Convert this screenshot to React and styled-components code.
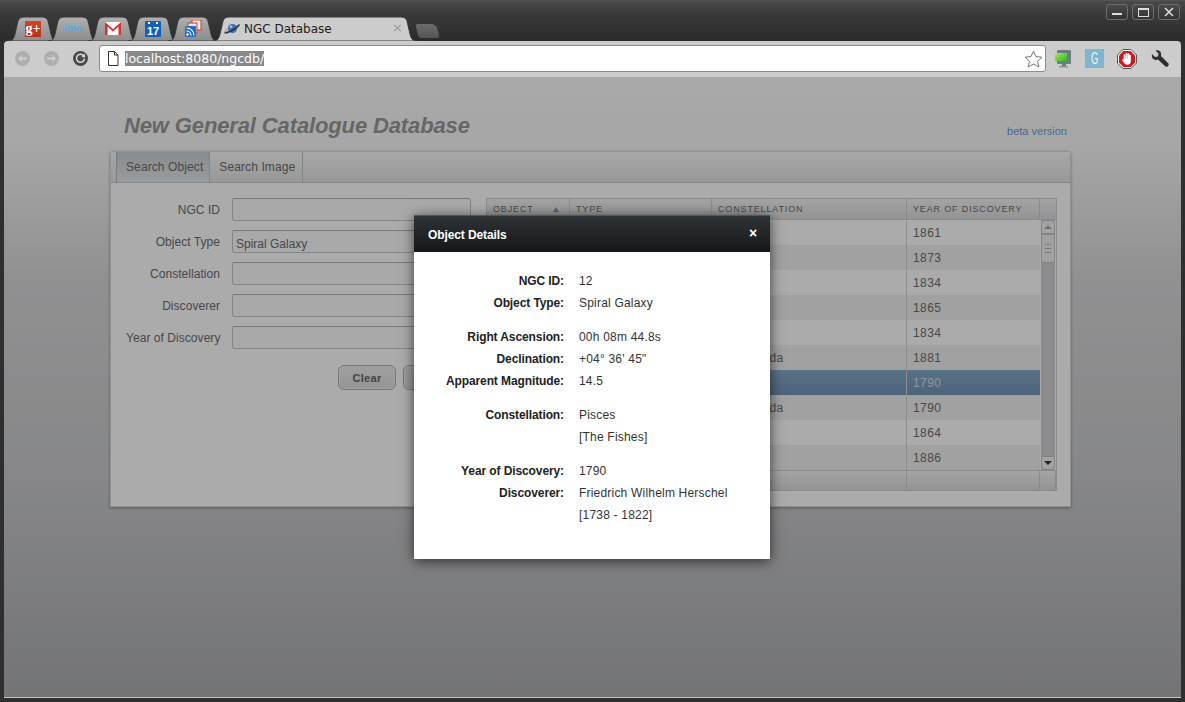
import React from "react";
import styled, { createGlobalStyle } from "styled-components";

const GlobalStyle = createGlobalStyle`
	html, body {
		margin: 0;
		padding: 0;
		height: 100%;
		overflow: hidden;
		font-family: "Liberation Sans", Arial, sans-serif;
	}
`;

const Window = styled.div`
	position: relative;
	display: flex;
	flex-direction: column;
	width: 1185px;
	height: 702px;
	padding-bottom: 4px;
	box-sizing: border-box;
	overflow: hidden;
	background: #2f2f2f;
`;

/* browser chrome */
const TitleBar = styled.div`
	display: flex;
	align-items: flex-end;
	justify-content: space-between;
	flex: none;
	height: 41px;
	padding: 0 5px 0 8px;
	background: linear-gradient(#565656 0, #484848 2px, #3a3a3a 14px, #2b2b2b 41px);
`;

const TabStrip = styled.div`
	display: flex;
	align-items: flex-end;
	height: 25px;
`;

const Tab = styled.div`
	position: relative;
	display: flex;
	align-items: center;
	justify-content: ${(p) => (p.$active ? "flex-start" : "center")};
	flex: none;
	width: ${(p) => (p.$active ? "204px" : "50px")};
	height: 25px;
	margin-left: ${(p) => (p.$active ? "5px" : "0")};
	margin-right: -10px;
	padding: ${(p) => (p.$active ? "0 0 0 11px" : "0")};
	box-sizing: border-box;
	z-index: ${(p) => (p.$active ? 2 : 1)};
`;

const TabShape = styled.svg`
	position: absolute;
	left: 0;
	top: 0;
	width: 100%;
	height: 100%;
	z-index: -1;
`;

const TabTitle = styled.span`
	margin-left: 4px;
	font-family: "DejaVu Sans", sans-serif;
	font-size: 12px;
	color: #1c1c1c;
`;

const TabClose = styled.span`
	position: absolute;
	right: 14px;
	top: 4px;
	font-family: "DejaVu Sans", sans-serif;
	font-size: 13px;
	color: #9a9a9a;
`;

const NewTab = styled.div`
	width: 21px;
	height: 14px;
	margin: 0 0 3px 10px;
	border-radius: 3px 5px 3px 3px;
	transform: skewX(14deg);
	background: linear-gradient(#6c6c6c, #555);
`;

const GooglePlus = styled.span`
	display: flex;
	align-items: center;
	justify-content: center;
	width: 16px;
	height: 16px;
	background: linear-gradient(#d4452a, #b5301a);
	color: #fff;
	font-family: "Liberation Serif", serif;
	font-weight: bold;
	font-size: 14px;
	line-height: 14px;
`;

const Imo = styled.span`
	font-size: 10px;
	font-weight: bold;
	color: #5aa8e0;
`;

const CalendarIcon = styled.span`
	display: flex;
	align-items: flex-end;
	justify-content: center;
	width: 16px;
	height: 16px;
	border-radius: 1px;
	background:
		radial-gradient(circle at 4px 2px, #fff 1px, transparent 1.3px),
		radial-gradient(circle at 12px 2px, #fff 1px, transparent 1.3px),
		#0f62b8;
	color: #fff;
	font-weight: bold;
	font-size: 11px;
	line-height: 12px;
`;

const WindowControls = styled.div`
	display: flex;
	gap: 4px;
	align-self: flex-start;
	margin-top: 4px;
`;

const ControlButton = styled.div`
	display: flex;
	align-items: center;
	justify-content: center;
	width: 22px;
	height: 16px;
	box-sizing: border-box;
	border: 1px solid #6e6e6e;
	border-radius: 3px;
	background: linear-gradient(#4a4a4a, #333);
`;

const Toolbar = styled.div`
	display: flex;
	align-items: center;
	flex: none;
	height: 36px;
	margin: 0 4px;
	padding: 0 0 1px 11px;
	box-sizing: border-box;
	border-radius: 4px 4px 0 0;
	background: #cccccc;
`;

const NavButton = styled.div`
	display: flex;
	align-items: center;
	justify-content: center;
	width: 15px;
	height: 15px;
	margin-right: ${(p) => p.$gap}px;
	border-radius: 50%;
	background: ${(p) => (p.$on ? "#4a4a4a" : "#aeaeae")};
`;

const UrlBox = styled.div`
	display: flex;
	align-items: center;
	flex: none;
	width: 947px;
	height: 27px;
	margin: 0 8px 0 11px;
	padding: 0 2px 0 7px;
	box-sizing: border-box;
	border: 1px solid #8a8a8a;
	border-radius: 3px;
	background: #fff;
`;

const UrlText = styled.span`
	flex: 1;
	margin-left: 6px;
	font-family: "DejaVu Sans", sans-serif;
	font-size: 12.5px;
	line-height: 15px;
	color: #fff;
	& > span {
		background: #878787;
	}
`;

const Extensions = styled.div`
	display: flex;
	align-items: center;
	gap: 13px;
`;

const GoodIcon = styled.span`
	display: flex;
	align-items: center;
	justify-content: center;
	width: 19px;
	height: 19px;
	background: #7eb5cf;
	color: #eef7fa;
	font-size: 17px;
	line-height: 17px;
	& > span {
		transform: scaleX(0.55);
	}
`;

/* the page under the modal mask */
const Page = styled.div`
	flex: 1;
	display: flex;
	flex-direction: column;
	margin: 0 4px;
	padding: 0 110px 0 106px;
	border-bottom: 1px solid #c4c4c4;
	background: linear-gradient(#fdfdfd 0, #f8f8f8 70px, #d8d8da 200px, #c8c9cb 403px, #acadaf 620px);
`;

const PageHead = styled.header`
	display: flex;
	align-items: flex-end;
	justify-content: space-between;
	height: 74px;
	padding: 0 4px 14px 14px;
	box-sizing: border-box;
`;

const Title = styled.h1`
	margin: 0 0 -2px;
	font-size: 22px;
	line-height: 26px;
	font-style: italic;
	font-weight: bold;
	letter-spacing: -0.13px;
	color: #999;
`;

const Beta = styled.span`
	font-size: 11px;
	color: #6d9fd6;
`;

const Panel = styled.section`
	height: 356px;
	box-sizing: border-box;
	border: 1px solid #d8d8d8;
	border-radius: 4px 4px 0 0;
	background: #fff;
	box-shadow: 0 1px 3px rgba(0, 0, 0, 0.35);
`;

const TabBar = styled.nav`
	display: flex;
	height: 31px;
	padding-left: 5px;
	box-sizing: border-box;
	border-bottom: 1px solid #c8c9cb;
	background: linear-gradient(#fafafa, #e2e3e5);
`;

const PanelTab = styled.div`
	display: flex;
	align-items: center;
	padding: 0 ${(p) => (p.$active ? "6px" : "7px")} 0 9px;
	border-left: ${(p) => (p.$active ? "1px solid #b4bac0" : "none")};
	border-right: 1px solid #c2c3c5;
	background: ${(p) => (p.$active ? "linear-gradient(#c8d0d6, #e6e9ec)" : "none")};
	font-size: 12px;
	letter-spacing: 0.1px;
	color: #6c6c6c;
`;

const PanelBody = styled.div`
	display: flex;
	gap: 15px;
	padding: 15px 14px 0 15px;
`;

const SearchForm = styled.form`
	display: flex;
	flex-direction: column;
	gap: 9px;
	width: 345px;
	flex: none;
`;

const FormRow = styled.div`
	display: flex;
	align-items: center;
	gap: 12px;
	height: 23px;
`;

const FormLabel = styled.label`
	width: 94px;
	flex: none;
	text-align: right;
	white-space: nowrap;
	font-size: 12px;
	letter-spacing: 0.05px;
	color: #6c6c6c;
`;

const FormField = styled.div`
	width: 239px;
	height: 23px;
	padding: 4px 3px 0;
	box-sizing: border-box;
	border: 1px solid #c4c5c7;
	border-top-color: #b0b1b3;
	border-radius: 3px;
	background: #fdfdfd;
	font-size: 12px;
	line-height: 18px;
	color: #6c6c6c;
`;

const FormActions = styled.div`
	display: flex;
	gap: 7px;
	margin-top: 7px;
	padding-left: 212px;
`;

const FormButton = styled.button`
	width: 58px;
	height: 25px;
	padding: 0;
	border: 1px solid #b0b1b3;
	border-radius: 6px;
	background: linear-gradient(#eeeeee, #dcdde0);
	box-shadow: inset 0 0 0 1px #f2f2f2;
	font-family: inherit;
	font-size: 11px;
	font-weight: bold;
	letter-spacing: 0.3px;
	color: #666;
`;

const Grid = styled.div`
	width: 571px;
	flex: none;
	box-sizing: border-box;
	border: 1px solid #cfd0d2;
`;

const columns = "83px 142px 195px 133px 16px";

const GridHead = styled.div`
	display: grid;
	grid-template-columns: ${columns};
	height: 21px;
	box-sizing: border-box;
	border-bottom: 1px solid #cfd0d2;
	background: linear-gradient(#f4f4f5, #dbdcde);
`;

const HeadCell = styled.div`
	display: flex;
	align-items: center;
	justify-content: space-between;
	padding: 0 10px 0 6px;
	box-sizing: border-box;
	border-right: 1px solid #cfd0d2;
	font-size: 9px;
	letter-spacing: 0.85px;
	color: #6c6c6c;
`;

const SortArrow = styled.span`
	width: 0;
	height: 0;
	border-left: 3px solid transparent;
	border-right: 3px solid transparent;
	border-bottom: 5px solid #7d97bd;
`;

const GridMiddle = styled.div`
	display: flex;
	height: 250px;
`;

const GridRows = styled.div`
	width: 553px;
	flex: none;
`;

const Row = styled.div`
	display: grid;
	grid-template-columns: 83px 142px 195px 133px;
	height: 25px;
	background: ${(p) =>
		p.$selected
			? "linear-gradient(#86abc8, #7493b8)"
			: p.$odd
			? "#ffffff"
			: "#f1f1f2"};
`;

const Cell = styled.div`
	display: flex;
	align-items: center;
	padding-left: 6px;
	box-sizing: border-box;
	border-right: ${(p) => (p.$last ? "none" : "1px solid #d3d4d6")};
	font-size: 12px;
	letter-spacing: 0.4px;
	color: ${(p) => (p.$selected ? "#d8dde6" : "#6c6c6c")};
`;

const Scrollbar = styled.div`
	display: flex;
	flex-direction: column;
	width: 14px;
	margin-left: 1px;
	background: #d2d3d5;
`;

const ScrollArrow = styled.div`
	display: flex;
	align-items: center;
	justify-content: center;
	height: 14px;
	box-sizing: border-box;
	border: 1px solid #c0c1c3;
	border-radius: ${(p) => (p.$up ? "4px 4px 0 0" : "0 0 4px 4px")};
	margin-top: ${(p) => (p.$up ? "0" : "auto")};
	background: #f4f4f5;
`;

const ScrollThumb = styled.div`
	display: flex;
	align-items: center;
	justify-content: center;
	height: 29px;
	box-sizing: border-box;
	border: 1px solid #c6c7c9;
	background: #f0f0f1;
`;

const Grip = styled.span`
	width: 6px;
	height: 7px;
	border-top: 1px solid #b4b5b7;
	border-bottom: 1px solid #b4b5b7;
	background: linear-gradient(transparent 3px, #b4b5b7 3px, #b4b5b7 4px, transparent 4px);
`;

const Arrow = styled.span`
	width: 0;
	height: 0;
	border-left: 4px solid transparent;
	border-right: 4px solid transparent;
	${(p) =>
		p.$up
			? "border-bottom: 4px solid #aaa;"
			: "border-top: 4px solid #333;"}
`;

const GridFoot = styled.div`
	display: grid;
	grid-template-columns: ${columns};
	height: 20px;
	box-sizing: border-box;
	border-top: 1px solid #cfd0d2;
	background: linear-gradient(#f4f4f5, #dbdcde);
`;

const FootCell = styled.div`
	border-right: 1px solid #cfd0d2;
`;

/* modal */
const Mask = styled.div`
	position: absolute;
	left: 4px;
	right: 4px;
	top: 77px;
	bottom: 5px;
	background: rgba(0, 0, 0, 0.33);
`;

const Modal = styled.div`
	position: absolute;
	left: 414px;
	top: 215px;
	width: 356px;
	height: 344px;
	background: #fff;
	box-shadow: 0 2px 12px rgba(0, 0, 0, 0.65);
`;

const ModalHead = styled.div`
	display: flex;
	align-items: center;
	justify-content: space-between;
	height: 37px;
	padding: 2px 13px 0 14px;
	box-sizing: border-box;
	border-top: 1px solid #555;
	background: linear-gradient(#303335, #15171a);
	color: #fff;
	font-size: 12px;
	font-weight: bold;
	letter-spacing: -0.1px;
`;

const ModalClose = styled.span`
	font-size: 14px;
	line-height: 14px;
	margin-top: -4px;
`;

const ModalBody = styled.div`
	display: flex;
	flex-direction: column;
	gap: 12px;
	padding-top: 18px;
`;

const DetailGroup = styled.div`
	display: flex;
	flex-direction: column;
`;

const DetailRow = styled.div`
	display: grid;
	grid-template-columns: 150px 1fr;
	column-gap: 15px;
	height: 22px;
	align-items: center;
	font-size: 12px;
`;

const DetailLabel = styled.span`
	text-align: right;
	font-weight: bold;
	letter-spacing: -0.1px;
	color: #222;
`;

const DetailValue = styled.span`
	letter-spacing: 0.2px;
	color: #333;
`;

const TabGlyph = ({ width, active }) => (
	<TabShape viewBox={`0 0 ${width} 25`} preserveAspectRatio="none">
		<defs>
			<linearGradient id="pinned-tab" x1="0" y1="0" x2="0" y2="1">
				<stop offset="0" stopColor="#b0b0b0" />
				<stop offset="1" stopColor="#8c8c8c" />
			</linearGradient>
		</defs>
		<path
			d={`M0 25 C5 25 6 22 7 18 L10 5 C11 2 13 1 16 1 L${width - 16} 1 C${width - 13} 1 ${width - 11} 2 ${width - 10} 5 L${width - 7} 18 C${width - 6} 22 ${width - 5} 25 ${width} 25 Z`}
			fill={active ? "#cccccc" : "url(#pinned-tab)"}
			stroke="#3a3a3a"
			strokeWidth="1"
		/>
	</TabShape>
);

const Saturn = () => (
	<svg width="16" height="16" viewBox="0 0 16 16">
		<circle cx="8.5" cy="7.5" r="4.6" fill="#3f6fc0" />
		<circle cx="7" cy="5.8" r="1.4" fill="#a9c4ee" />
		<path d="M0.5 12 C4 12 12 8 15.5 3.5" stroke="#333" strokeWidth="1.6" fill="none" />
		<path d="M3.5 7.5 C1 10 0 12 1 12.5" stroke="#888" strokeWidth="1" fill="none" />
	</svg>
);

const Gmail = () => (
	<svg width="16" height="13" viewBox="0 0 16 13">
		<rect x="0" y="0" width="16" height="13" fill="#fff" />
		<path d="M0 0 L8 7 L16 0 L16 13 L13.5 13 L13.5 4.5 L8 9.5 L2.5 4.5 L2.5 13 L0 13 Z" fill="#d9342b" />
	</svg>
);

const Feed = () => (
	<svg width="17" height="17" viewBox="0 0 17 17">
		<rect x="7" y="0" width="9" height="10" fill="#f4f4f4" stroke="#c8392b" />
		<rect x="3" y="3" width="9" height="10" fill="#e7e7e7" stroke="#c8392b" />
		<rect x="0" y="6" width="11" height="11" rx="1" fill="#1f6fd0" />
		<circle cx="2.5" cy="14.5" r="1.2" fill="#fff" />
		<path d="M1.5 11 A4.5 4.5 0 0 1 6 15.5 M1.5 8 A7.5 7.5 0 0 1 9 15.5" stroke="#fff" strokeWidth="1.2" fill="none" />
	</svg>
);

const PageIcon = () => (
	<svg width="12" height="15" viewBox="0 0 12 15">
		<path d="M1.5 0.5 L7.5 0.5 L11 4 L11 14.5 L1.5 14.5 Z M7.5 0.5 L7.5 4 L11 4" fill="#fff" stroke="#333" />
	</svg>
);

const Star = () => (
	<svg width="19" height="18" viewBox="0 0 19 18">
		<path d="M9.5 1 L12 6.6 L18 7.2 L13.5 11.2 L14.9 17 L9.5 14 L4.1 17 L5.5 11.2 L1 7.2 L7 6.6 Z" fill="#fff" stroke="#777" />
	</svg>
);

const MonitorIcon = () => (
	<svg width="18" height="20" viewBox="0 0 18 20">
		<defs>
			<linearGradient id="monitor-screen" x1="0" y1="0" x2="1" y2="1">
				<stop offset="0" stopColor="#a8e85a" />
				<stop offset="1" stopColor="#2fb52f" />
			</linearGradient>
		</defs>
		<rect x="3" y="1" width="14" height="14" rx="1" fill="#6d7c84" />
		<rect x="1" y="4" width="12" height="8" fill="url(#monitor-screen)" />
		<rect x="8" y="15" width="4" height="2" fill="#6d7c84" />
		<rect x="5" y="17" width="9" height="1.5" fill="#8b969c" />
	</svg>
);

const StopHand = () => (
	<svg width="20" height="20" viewBox="0 0 20 20">
		<path d="M6 0.5 L14 0.5 L19.5 6 L19.5 14 L14 19.5 L6 19.5 L0.5 14 L0.5 6 Z" fill="#fff" stroke="#555" />
		<path d="M6.5 2 L13.5 2 L18 6.5 L18 13.5 L13.5 18 L6.5 18 L2 13.5 L2 6.5 Z" fill="#d8141a" />
		<path d="M7.5 10 L7.5 6 M9.5 10 L9.5 4.5 M11.5 10 L11.5 5 M13 10 L13 6.5" stroke="#fff" strokeWidth="1.7" strokeLinecap="round" />
		<path d="M6.7 9.5 L13.8 9.5 L13.8 12 Q13.8 15.8 10.2 15.8 Q8 15.8 7 14 L5 11 L5.6 10.2 L6.7 11 Z" fill="#fff" />
	</svg>
);

const Wrench = () => (
	<svg width="20" height="20" viewBox="0 0 20 20">
		<path d="M2 5 L5 8 L8 7.5 L8.5 4.5 L5.5 1.5 C9 0.5 12 3 11 7 L18.5 14.5 C19.5 16 17.5 18.5 15.5 17.5 L8 10.5 C4 12 1 9 2 5 Z" fill="#2e2e2e" />
	</svg>
);

const rows = [
	{ year: "1861" },
	{ year: "1873" },
	{ year: "1834" },
	{ year: "1865" },
	{ year: "1834" },
	{ year: "1881", constellation: "Andromeda" },
	{ year: "1790", selected: true },
	{ year: "1790", constellation: "Andromeda" },
	{ year: "1864" },
	{ year: "1886" },
];

const fields = [
	{ label: "NGC ID" },
	{ label: "Object Type", value: "Spiral Galaxy" },
	{ label: "Constellation" },
	{ label: "Discoverer" },
	{ label: "Year of Discovery" },
];

const details = [
	[
		["NGC ID:", "12"],
		["Object Type:", "Spiral Galaxy"],
	],
	[
		["Right Ascension:", "00h 08m 44.8s"],
		["Declination:", "+04° 36' 45\""],
		["Apparent Magnitude:", "14.5"],
	],
	[
		["Constellation:", "Pisces"],
		["", "[The Fishes]"],
	],
	[
		["Year of Discovery:", "1790"],
		["Discoverer:", "Friedrich Wilhelm Herschel"],
		["", "[1738 - 1822]"],
	],
];

const App = () => {
	return (
		<Window>
			<GlobalStyle />
			<TitleBar>
				<TabStrip>
					<Tab><TabGlyph width={50} /><GooglePlus>g+</GooglePlus></Tab>
					<Tab><TabGlyph width={50} /><Imo>imo</Imo></Tab>
					<Tab><TabGlyph width={50} /><Gmail /></Tab>
					<Tab><TabGlyph width={50} /><CalendarIcon>17</CalendarIcon></Tab>
					<Tab><TabGlyph width={50} /><Feed /></Tab>
					<Tab $active>
						<TabGlyph width={204} active />
						<Saturn />
						<TabTitle>NGC Database</TabTitle>
						<TabClose>×</TabClose>
					</Tab>
					<NewTab />
				</TabStrip>
				<WindowControls>
					<ControlButton>
						<svg width="10" height="10" viewBox="0 0 10 10"><rect x="0" y="6" width="10" height="2" fill="#ddd" /></svg>
					</ControlButton>
					<ControlButton>
						<svg width="11" height="9" viewBox="0 0 11 9"><rect x="0.5" y="0.5" width="10" height="8" fill="none" stroke="#ddd" /><rect x="0" y="0" width="11" height="2" fill="#ddd" /></svg>
					</ControlButton>
					<ControlButton>
						<svg width="10" height="10" viewBox="0 0 10 10"><path d="M1 1 L9 9 M9 1 L1 9" stroke="#ddd" strokeWidth="1.6" /></svg>
					</ControlButton>
				</WindowControls>
			</TitleBar>
			<Toolbar>
				<NavButton $gap={14}>
					<svg width="9" height="7" viewBox="0 0 9 7"><path d="M0 3.5 L3.5 0 L3.5 2.5 L9 2.5 L9 4.5 L3.5 4.5 L3.5 7 Z" fill="#cfcfcf" /></svg>
				</NavButton>
				<NavButton $gap={14}>
					<svg width="9" height="7" viewBox="0 0 9 7"><path d="M9 3.5 L5.5 0 L5.5 2.5 L0 2.5 L0 4.5 L5.5 4.5 L5.5 7 Z" fill="#cfcfcf" /></svg>
				</NavButton>
				<NavButton $on $gap={0}>
					<svg width="11" height="11" viewBox="0 0 11 11"><path d="M8.8 3 A4 4 0 1 0 9.5 5.5" fill="none" stroke="#ddd" strokeWidth="1.5" /><path d="M10 0.5 L10 4.2 L6.4 4.2 Z" fill="#ddd" /></svg>
				</NavButton>
				<UrlBox>
					<PageIcon />
					<UrlText><span>localhost:8080/ngcdb/</span></UrlText>
					<Star />
				</UrlBox>
				<Extensions>
					<MonitorIcon />
					<GoodIcon><span>G</span></GoodIcon>
					<StopHand />
					<Wrench />
				</Extensions>
			</Toolbar>
			<Page>
				<PageHead>
					<Title>New General Catalogue Database</Title>
					<Beta>beta version</Beta>
				</PageHead>
				<Panel>
					<TabBar>
						<PanelTab $active>Search Object</PanelTab>
						<PanelTab>Search Image</PanelTab>
					</TabBar>
					<PanelBody>
						<SearchForm>
							{fields.map((field) => (
								<FormRow key={field.label}>
									<FormLabel>{field.label}</FormLabel>
									<FormField>{field.value}</FormField>
								</FormRow>
							))}
							<FormActions>
								<FormButton type="button">Clear</FormButton>
								<FormButton type="button" />
							</FormActions>
						</SearchForm>
						<Grid>
							<GridHead>
								<HeadCell>OBJECT<SortArrow /></HeadCell>
								<HeadCell>TYPE</HeadCell>
								<HeadCell>CONSTELLATION</HeadCell>
								<HeadCell>YEAR OF DISCOVERY</HeadCell>
								<HeadCell />
							</GridHead>
							<GridMiddle>
								<GridRows>
									{rows.map((row, index) => (
										<Row key={index} $odd={index % 2 === 0} $selected={row.selected}>
											<Cell />
											<Cell />
											<Cell>{row.constellation}</Cell>
											<Cell $last $selected={row.selected}>{row.year}</Cell>
										</Row>
									))}
								</GridRows>
								<Scrollbar>
									<ScrollArrow $up><Arrow $up /></ScrollArrow>
									<ScrollThumb><Grip /></ScrollThumb>
									<ScrollArrow><Arrow /></ScrollArrow>
								</Scrollbar>
							</GridMiddle>
							<GridFoot>
								<FootCell />
								<FootCell />
								<FootCell />
								<FootCell />
								<FootCell />
							</GridFoot>
						</Grid>
					</PanelBody>
				</Panel>
			</Page>
			<Mask />
			<Modal>
				<ModalHead>
					<span>Object Details</span>
					<ModalClose>×</ModalClose>
				</ModalHead>
				<ModalBody>
					{details.map((group, i) => (
						<DetailGroup key={i}>
							{group.map(([label, value]) => (
								<DetailRow key={value}>
									<DetailLabel>{label}</DetailLabel>
									<DetailValue>{value}</DetailValue>
								</DetailRow>
							))}
						</DetailGroup>
					))}
				</ModalBody>
			</Modal>
		</Window>
	);
};

export default App;
